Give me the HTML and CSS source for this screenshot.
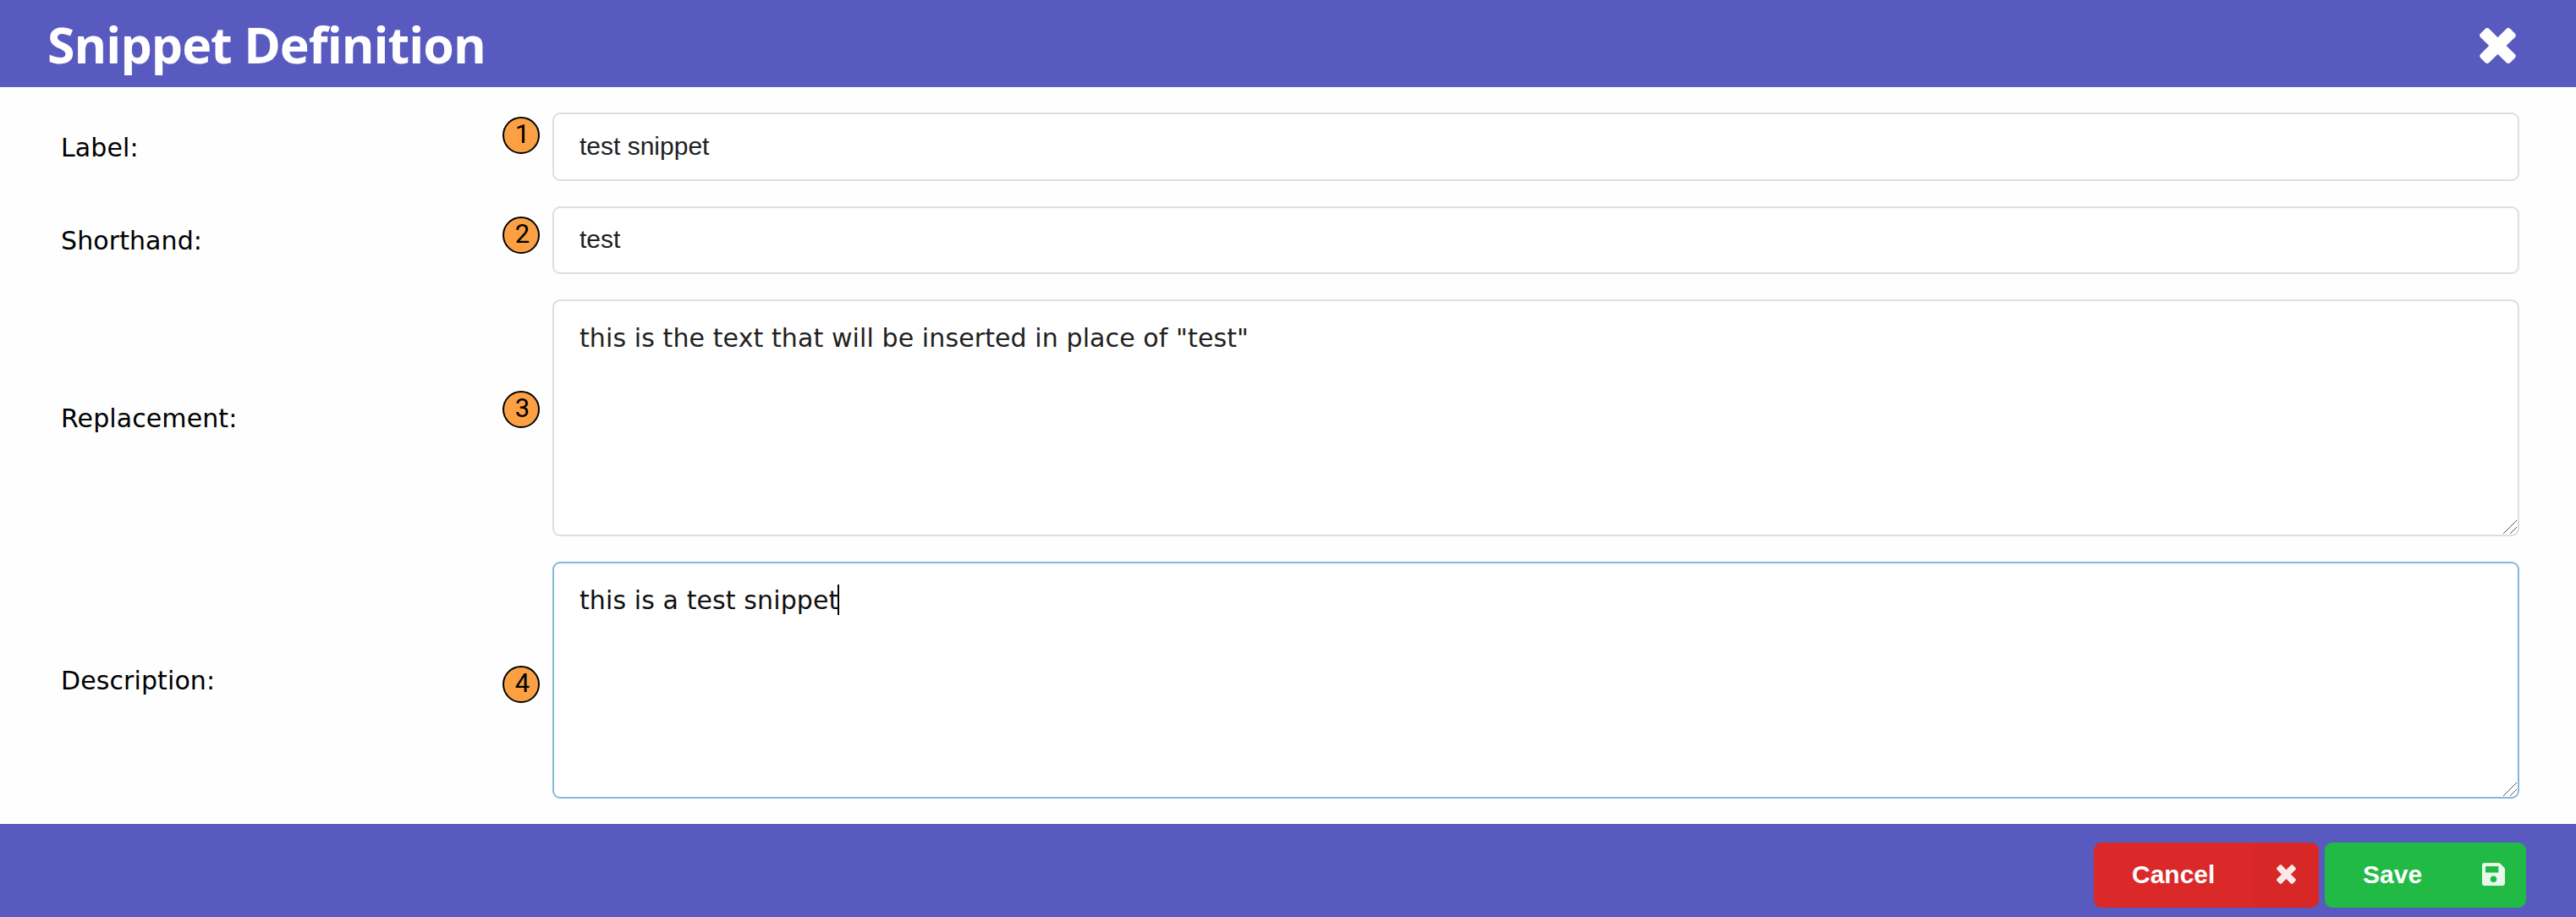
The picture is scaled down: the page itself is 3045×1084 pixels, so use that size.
FILE: index.html
```html
<!DOCTYPE html>
<html lang="en">
<head>
<meta charset="utf-8">
<title>Snippet Definition</title>
<link rel="stylesheet" href="styles.css">
</head>
<body>
<div class="dialog">
  <header class="header">
    <h1 class="title">Snippet Definition</h1>
    <svg class="close" viewBox="0 0 43 42"><path d="M7 0.8Q9 -0.8 11 0.8L21.5 11.2 32 0.8Q34 -0.8 36 0.8L42 6.8Q43.6 9 42 11L31.6 21 42 31.2Q43.6 33 42 35.2L36 41.2Q34 42.8 32 41.2L21.5 31 11 41.2Q9 42.8 7 41.2L1 35.2Q-0.6 33 1 31.2L11.2 21 1 11Q-0.6 9 1 6.8Z"/></svg>
  </header>
  <main class="form">
    <div class="row">
      <label class="label" for="label">Label:</label>
      <input class="field" id="label" value="test snippet">
      <span class="badge badge-1">1</span>
    </div>
    <div class="row">
      <label class="label" for="shorthand">Shorthand:</label>
      <input class="field" id="shorthand" value="test">
      <span class="badge badge-2">2</span>
    </div>
    <div class="row row-tall">
      <label class="label" for="replacement">Replacement:</label>
      <textarea class="field area" id="replacement" spellcheck="false">this is the text that will be inserted in place of "test"</textarea>
      <span class="badge badge-3">3</span>
      <svg class="grip" viewBox="0 0 16 16"><path d="M0 16L16 0M8 16L16 8"/></svg>
    </div>
    <div class="row row-tall">
      <label class="label" for="description">Description:</label>
      <textarea class="field area active" id="description" spellcheck="false">this is a test snippet</textarea>
      <span class="badge badge-4">4</span>
      <span class="caret"></span>
      <svg class="grip" viewBox="0 0 16 16"><path d="M0 16L16 0M8 16L16 8"/></svg>
    </div>
  </main>
  <footer class="footer">
    <button class="button cancel"><span class="button-text">Cancel</span><span class="button-icon"><svg class="icon-x" viewBox="0 0 43 42" preserveAspectRatio="none"><path d="M7 0.8Q9 -0.8 11 0.8L21.5 11.2 32 0.8Q34 -0.8 36 0.8L42 6.8Q43.6 9 42 11L31.6 21 42 31.2Q43.6 33 42 35.2L36 41.2Q34 42.8 32 41.2L21.5 31 11 41.2Q9 42.8 7 41.2L1 35.2Q-0.6 33 1 31.2L11.2 21 1 11Q-0.6 9 1 6.8Z"/></svg></span></button>
    <button class="button save"><span class="button-text">Save</span><span class="button-icon"><svg class="icon-save" viewBox="0 0 27 27"><path fill-rule="evenodd" d="M3 0H19.5Q20.7 0 21.6.9L26.1 5.4Q27 6.3 27 7.5V24Q27 27 24 27H3Q0 27 0 24V3Q0 0 3 0ZM4.6 4Q4 4 4 4.6V11Q4 11.6 4.6 11.6H18.7Q19.3 11.6 19.3 11V4.6Q19.3 4 18.7 4ZM13.5 15.5A3.8 3.8 0 1 0 13.5 23.1A3.8 3.8 0 1 0 13.5 15.5Z"/></svg></span></button>
  </footer>
</div>
</body>
</html>
```
FILE: styles.css
```css
* { box-sizing: border-box; }
body { margin: 0; overflow: hidden; }
.dialog {
  display: flex;
  flex-direction: column;
  height: 1084px;
  overflow: hidden;
  background: #fefefe;
}
.header {
  display: flex;
  align-items: center;
  justify-content: space-between;
  height: 103px;
  padding: 0 71px 0 56px;
  background: #595abf;
}
.title {
  margin: 0;
  color: #fff;
  font: 700 59px/80px "Open Sans", sans-serif;
  font-variant-ligatures: none;
  letter-spacing: -0.95px;
}
.close {
  width: 43px;
  height: 42px;
  margin-top: 5px;
  fill: #fff;
}
.form {
  display: flex;
  flex: 1;
  flex-direction: column;
  gap: 30px;
  padding: 30px 67px 30px 72px;
}
.row {
  position: relative;
  display: grid;
  grid-template-columns: 581px 1fr;
  align-items: center;
  height: 81px;
}
.row:nth-child(2) { height: 80px; }
.row-tall { height: 280px; }
.label {
  padding-top: 2px;
  color: #000;
  font: 30px/40px "DejaVu Sans", sans-serif;
  letter-spacing: 0.1px;
}
.field {
  width: 100%;
  height: 100%;
  padding: 0 30px 2px;
  border: 2px solid #dededf;
  border-radius: 9px;
  outline: 0;
  background: #fff;
  color: #212121;
  font: 30px "Liberation Sans", Arial, sans-serif;
}
.area {
  display: block;
  padding: 24px 30px;
  font: 30px/39px "DejaVu Sans", sans-serif;
  letter-spacing: 0.1px;
  resize: none;
  overflow: hidden;
}
.active {
  border-color: #85b7d9;
  color: #101010;
}
.badge {
  position: absolute;
  left: 522px;
  width: 44px;
  height: 44px;
  padding-left: 3px;
  border: 2px solid #000;
  border-radius: 50%;
  background: #fca044;
  color: #000;
  font: 31px/38px Roboto, sans-serif;
  text-align: center;
}
.badge-1 { top: 5px; }
.badge-2 { top: 12px; }
.badge-3 { top: 108px; }
.badge-4 { top: 123px; }
.caret {
  position: absolute;
  left: 918px;
  top: 27px;
  width: 2px;
  height: 36px;
  background: #000;
}
.grip {
  position: absolute;
  right: 3px;
  bottom: 3px;
  width: 16px;
  height: 16px;
  fill: none;
  stroke: #555;
  stroke-width: 1;
}
.footer {
  display: flex;
  justify-content: flex-end;
  gap: 7px;
  height: 110px;
  padding: 22px 59px 11px 0;
  background: #595abf;
}
.button {
  display: flex;
  align-items: stretch;
  height: 77px;
  padding: 0;
  overflow: hidden;
  border: 0;
  border-radius: 9px;
  color: #fff;
  font: 700 30px/75px "Liberation Sans", Arial, sans-serif;
}
.cancel { width: 266px; background: #db2828; }
.save { width: 238px; background: #21ba45; }
.button-text { flex: 1; padding-left: 45px; text-align: left; }
.button-icon {
  display: flex;
  align-items: center;
  justify-content: center;
  width: 77px;
  padding-bottom: 2px;
  fill: #fff;
}
.cancel .button-icon { background: rgba(0, 0, 0, 0.01); }
.button-icon svg { opacity: 0.9; }
.icon-x { width: 23px; height: 23px; }
.icon-save { width: 27px; height: 27px; }
```
